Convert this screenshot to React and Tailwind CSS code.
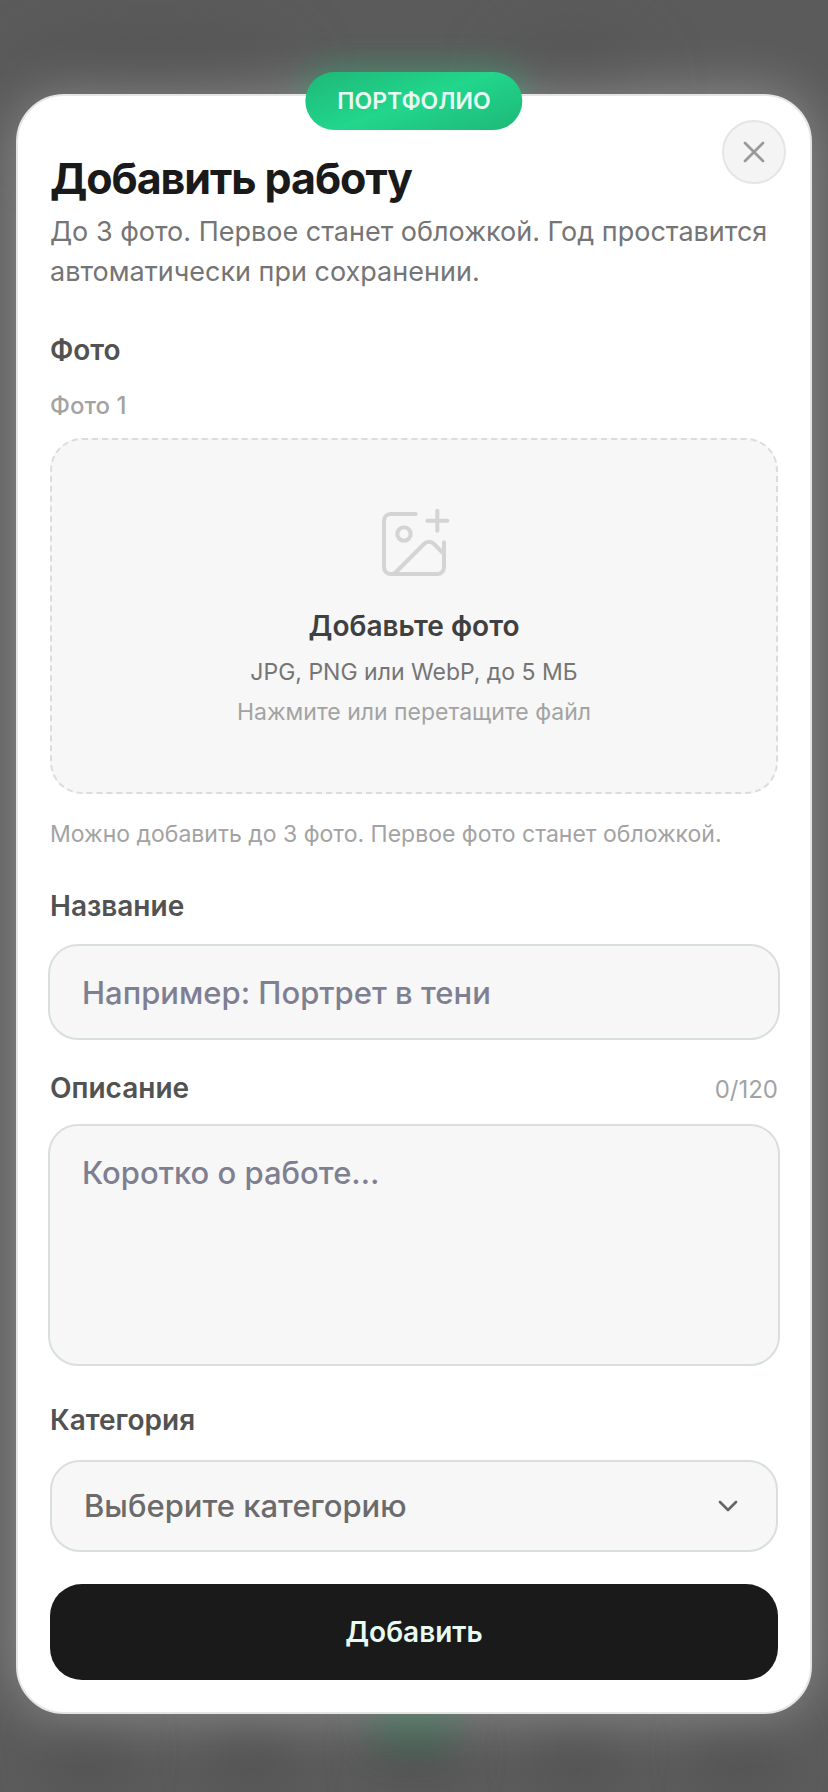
import { useState } from 'react';
import { ChevronDown, ImagePlus, X } from 'lucide-react';

const MAX_DESCRIPTION = 120;

const CATEGORIES = ['Портрет', 'Пейзаж', 'Репортаж', 'Предметная съёмка'];

const NAV_SPOTS = ['tab-1', 'tab-2', 'tab-3', 'tab-4', 'tab-5'];

const LABEL = 'block text-[28px] leading-9 font-semibold text-[#525252]';
const FIELD = 'block border-2 border-[#d9dfdd] rounded-[30px] bg-[#f7f7f7] px-8 text-[31px] font-medium outline-none';

// Blurred page that stays visible behind the dialog
function Backdrop() {
  return (
    <div className="absolute inset-0 -z-20 overflow-hidden bg-[#5b5b5b]" aria-hidden="true">
      <div className="absolute left-8 top-16 h-16 w-60 rounded-full bg-[#4e4e4e] blur-2xl" />
      <div className="absolute right-52 top-16 h-16 w-24 rounded-full bg-[#4c4c4c] blur-2xl" />
      <div className="absolute inset-x-12 bottom-2 flex justify-between">
        {NAV_SPOTS.map((id) => (
          <div key={id} className="h-16 w-20 rounded-full bg-[#535353] blur-xl" />
        ))}
      </div>
    </div>
  );
}

export default function App() {
  const [title, setTitle] = useState('');
  const [description, setDescription] = useState('');
  const [category, setCategory] = useState('');

  return (
    <div className="relative isolate min-h-screen px-4 pt-[94px] pb-[78px] font-['Inter','Noto_Sans',sans-serif]">
      <Backdrop />

      <div
        role="dialog"
        aria-labelledby="dialog-title"
        className="relative rounded-[48px] border-2 border-[#e5e5e5] bg-white px-8 pt-14 pb-8 shadow-[0_0_56px_rgba(255,255,255,0.32)]"
      >
        <span className="absolute -top-6 left-1/2 flex h-[58px] -translate-x-1/2 items-center rounded-full bg-[linear-gradient(160deg,#1db877_0%,#22d68c_50%,#1db877_100%)] px-8 text-[23px] font-semibold text-[#e8fbf3]">
          ПОРТФОЛИО
        </span>

        <button
          type="button"
          aria-label="Закрыть"
          className="absolute top-6 right-6 flex size-16 items-center justify-center rounded-full border-2 border-[#e5e5e5] bg-[#f4f4f4] text-[#999999]"
        >
          <X size={36} strokeWidth={1.8} />
        </button>

        <h1 id="dialog-title" className="text-[43px] leading-[52px] font-bold tracking-tight text-[#1a1a1a]">
          Добавить работу
        </h1>
        <p className="mt-2 text-[27px] leading-10 text-[#757575]">
          До 3 фото. Первое станет обложкой. Год проставится автоматически при сохранении.
        </p>

        <form onSubmit={(e) => e.preventDefault()}>
          {/* Фото */}
          <h2 className={`mt-10 ${LABEL}`}>Фото</h2>
          <p className="mt-[22px] text-2xl leading-8 font-medium text-[#a3a3a3]">Фото 1</p>
          <label className="mt-4 flex cursor-pointer flex-col items-center rounded-[32px] border-2 border-dashed border-[#dcdcdc] bg-[#f7f7f7] pt-16 pb-[60px] text-center">
            <input type="file" accept="image/jpeg,image/png,image/webp" className="sr-only" />
            <ImagePlus size={80} strokeWidth={1.2} className="text-[#d4d4d4]" />
            <span className="mt-6 text-[28px] leading-9 font-semibold text-[#404040]">Добавьте фото</span>
            <span className="mt-2 text-[23px] leading-10 text-[#757575]">JPG, PNG или WebP, до 5 МБ</span>
            <span className="text-[23px] leading-10 text-[#a3a3a3]">Нажмите или перетащите файл</span>
          </label>
          <p className="mt-6 text-[23px] leading-8 text-[#a3a3a3]">
            Можно добавить до 3 фото. Первое фото станет обложкой.
          </p>

          {/* Название */}
          <label htmlFor="work-title" className={`mt-[38px] ${LABEL}`}>Название</label>
          <div className="-mx-0.5 mt-5">
            <input
              id="work-title"
              type="text"
              value={title}
              onChange={(e) => setTitle(e.target.value)}
              placeholder="Например: Портрет в тени"
              className={`h-24 w-full text-[#1a1a1a] placeholder:text-[#7f7f92] ${FIELD}`}
            />
          </div>

          {/* Описание */}
          <div className="mt-[30px] flex items-baseline justify-between">
            <label htmlFor="work-description" className={LABEL}>Описание</label>
            <span className="text-2xl leading-8 text-[#a3a3a3]">{description.length}/{MAX_DESCRIPTION}</span>
          </div>
          <div className="-mx-0.5 mt-[18px]">
            <textarea
              id="work-description"
              rows={4}
              maxLength={MAX_DESCRIPTION}
              value={description}
              onChange={(e) => setDescription(e.target.value)}
              placeholder="Коротко о работе…"
              className={`h-[242px] w-full resize-none py-6 leading-[46px] text-[#1a1a1a] placeholder:text-[#7f7f92] ${FIELD}`}
            />
          </div>

          {/* Категория */}
          <label htmlFor="work-category" className={`mt-9 ${LABEL}`}>Категория</label>
          <div className="relative mt-[22px]">
            <select
              id="work-category"
              value={category}
              onChange={(e) => setCategory(e.target.value)}
              className={`h-[92px] w-full appearance-none text-[#6b6b6b] ${FIELD}`}
            >
              <option value="">Выберите категорию</option>
              {CATEGORIES.map((name) => (
                <option key={name} value={name}>{name}</option>
              ))}
            </select>
            <ChevronDown size={32} strokeWidth={2} className="pointer-events-none absolute top-[30px] right-[34px] text-[#666666]" />
          </div>

          <button
            type="submit"
            className="mt-8 h-24 w-full rounded-[32px] bg-[#1a1a1a] text-[28px] font-semibold text-[#e8fbf3]"
          >
            Добавить
          </button>
        </form>

        {/* green light from the badge and the tab bar button, under the card */}
        <div className="absolute -top-8 left-1/2 -z-10 h-16 w-56 -translate-x-1/2 rounded-full bg-[#1f9a64]/45 blur-lg" />
        <div className="absolute -bottom-10 left-1/2 -z-10 h-16 w-24 -translate-x-1/2 rounded-full bg-[#2f6b50]/50 blur-lg" />
      </div>
    </div>
  );
}
